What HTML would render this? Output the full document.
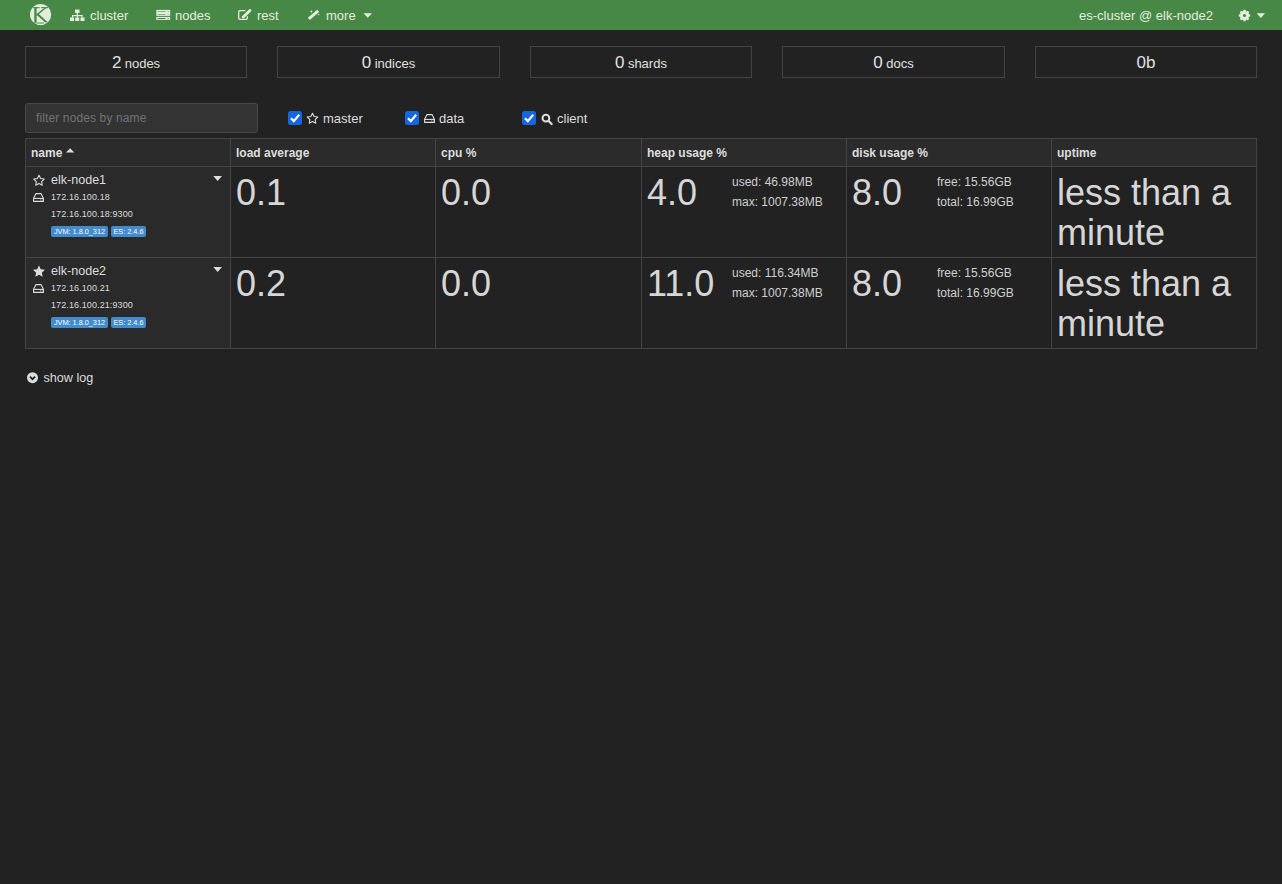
<!DOCTYPE html>
<html>
<head>
<meta charset="utf-8">
<style>
*{box-sizing:border-box;}
html,body{margin:0;padding:0;}
body{width:1282px;height:884px;background:#222222;font-family:"Liberation Sans",sans-serif;color:#dddddd;position:relative;overflow:hidden;font-size:12px;}
.a{position:absolute;white-space:nowrap;}
.nav{position:absolute;left:0;top:0;width:1282px;height:30px;background:#478847;color:#e4eede;font-size:13px;}
.nav .it{position:absolute;top:1px;height:30px;line-height:30px;white-space:nowrap;}
.stat{position:absolute;top:46px;height:32px;border:1px solid #444;text-align:center;line-height:32px;color:#e0e0e0;}
.stat b{font-weight:normal;font-size:17px;}
.stat span{font-size:13px;}
.filter{position:absolute;left:25px;top:103px;width:233px;height:30px;background:#333;border:1px solid #484848;border-radius:3px;color:#727272;font-size:12px;line-height:29px;padding-left:10px;letter-spacing:0.12px;}
.lbl{position:absolute;top:111px;font-size:13px;line-height:16px;color:#dddddd;}
.hl{position:absolute;background:#444;}
.th{position:absolute;top:139px;height:27px;line-height:28px;font-weight:bold;font-size:12px;color:#dddddd;}
.big{position:absolute;font-size:36px;line-height:42px;color:#d6d6d6;}
.sub{position:absolute;font-size:12px;line-height:20px;color:#d0d0d0;}
.up{position:absolute;font-size:36px;line-height:40px;color:#d6d6d6;}
.nm{position:absolute;font-size:13px;line-height:16px;color:#dddddd;transform:scaleX(0.965);transform-origin:0 0;}
.ip{position:absolute;font-size:9px;line-height:11px;color:#dcdcdc;letter-spacing:0.1px;transform:scaleY(1.08);transform-origin:0 0;}
.badge{position:absolute;top:0;height:11px;background:#428bcd;color:#fff;font-size:7.3px;line-height:11px;border-radius:2px;text-align:center;}
</style>
</head>
<body>
<div class="nav">
<svg class="a" style="left:0;top:0" width="1282" height="30" viewBox="0 0 1282 30">
<g fill="#e4eede">
<circle cx="40.6" cy="14.6" r="10.6" fill="#e2eedc"/>
<rect x="37" y="22.5" width="7" height="2.5" rx="1" fill="#e2eedc"/>
<rect x="75" y="9.5" width="4.5" height="3.5"/><rect x="76.7" y="13" width="1.2" height="2.2"/><rect x="72" y="15" width="10.5" height="1.2"/>
<rect x="72" y="15" width="1.2" height="2.5"/><rect x="76.7" y="15" width="1.2" height="2.5"/><rect x="81.3" y="15" width="1.2" height="2.5"/>
<rect x="70" y="17.5" width="4" height="3.5"/><rect x="75.2" y="17.5" width="4" height="3.5"/><rect x="80.5" y="17.5" width="4" height="3.5"/>
<rect x="156.3" y="9.9" width="13.9" height="6"/><rect x="156.3" y="16.9" width="13.9" height="3"/>
<path d="M245.5 10.7 H239.8 Q238.7 10.7 238.7 11.8 V18.2 Q238.7 19.3 239.8 19.3 H246.2 Q247.3 19.3 247.3 18.2 V16.3" fill="none" stroke="#e4eede" stroke-width="1.3"/>
<path d="M243.2 17 L250 10.6" stroke="#e4eede" stroke-width="2.8" stroke-linecap="round"/>
<path d="M308.8 18.8 L318.2 10.8" stroke="#e4eede" stroke-width="3"/>
<path d="M311.3 10 L311.8 11.2 L313 11.5 L311.8 11.9 L311.3 13 L310.9 11.9 L309.7 11.5 L310.9 11.2Z"/>
<path d="M318.6 13.6 L319 14.4 L319.8 14.6 L319 14.9 L318.6 15.7 L318.3 14.9 L317.5 14.6 L318.3 14.4Z"/>
<path d="M363.5 13.2 H372 L367.75 17.8Z"/>
<path d="M1256.7 13.2 H1265 L1260.85 17.9Z"/>
</g>
<g fill="#478847">
<rect x="34.3" y="7.2" width="2.3" height="15.6"/>
<rect x="33.2" y="7.1" width="6.3" height="1.1"/>
<rect x="41" y="7.1" width="7" height="1.1"/>
<rect x="36.6" y="22.6" width="7.4" height="0.9"/>
<polygon points="36.3,14.3 44.3,8 46.3,8 36.6,16"/>
<polygon points="38.2,13.4 47.8,22.2 45.2,22.6 36.8,15"/>
<rect x="157.5" y="11" width="8" height="1" opacity="0.6"/><rect x="157.5" y="14" width="8" height="1" opacity="0.6"/><rect x="157.5" y="18" width="8" height="1"/>
<rect x="167.6" y="11" width="1" height="1" opacity="0.6"/><rect x="167.6" y="14" width="1" height="1" opacity="0.6"/><rect x="167.6" y="18" width="1" height="1"/>
</g>
</svg>
<svg class="a" style="left:1238px;top:9px" width="13" height="13" viewBox="-6.5 -6.5 13 13">
<g fill="#e4eede"><circle r="4.5"/>
<rect x="-1.25" y="-5.7" width="2.5" height="11.4" rx="0.6"/>
<rect x="-1.25" y="-5.7" width="2.5" height="11.4" rx="0.6" transform="rotate(45)"/>
<rect x="-1.25" y="-5.7" width="2.5" height="11.4" rx="0.6" transform="rotate(90)"/>
<rect x="-1.25" y="-5.7" width="2.5" height="11.4" rx="0.6" transform="rotate(135)"/></g>
<circle r="1.6" fill="#478847"/>
</svg>
<div class="it" style="left:90px">cluster</div>
<div class="it" style="left:175px">nodes</div>
<div class="it" style="left:257px">rest</div>
<div class="it" style="left:326px">more</div>
<div class="it" style="left:1079px">es-cluster @ elk-node2</div>
</div>
<div class="stat" style="left:25px;width:222px"><b>2</b> <span>nodes</span></div>
<div class="stat" style="left:277px;width:223px"><b>0</b> <span>indices</span></div>
<div class="stat" style="left:530px;width:222px"><b>0</b> <span>shards</span></div>
<div class="stat" style="left:782px;width:223px"><b>0</b> <span>docs</span></div>
<div class="stat" style="left:1035px;width:222px"><b>0b</b></div>
<div class="filter">filter nodes by name</div>
<svg class="a" style="left:0;top:0" width="1282" height="884" viewBox="0 0 1282 884">
<rect x="288" y="111" width="14" height="14" rx="2.5" fill="#1467e0"/><path d="M291 118.3 L293.8 121.1 L299.2 114.8" fill="none" stroke="#fff" stroke-width="2.1"/>
<rect x="405" y="111" width="14" height="14" rx="2.5" fill="#1467e0"/><path d="M408 118.3 L410.8 121.1 L416.2 114.8" fill="none" stroke="#fff" stroke-width="2.1"/>
<rect x="522" y="111" width="14" height="14" rx="2.5" fill="#1467e0"/><path d="M525 118.3 L527.8 121.1 L533.2 114.8" fill="none" stroke="#fff" stroke-width="2.1"/>
<polygon points="312.50,113.20 314.12,116.48 317.73,117.00 315.12,119.55 315.73,123.15 312.50,121.45 309.27,123.15 309.88,119.55 307.27,117.00 310.88,116.48" fill="none" stroke="#dddddd" stroke-width="1.1" stroke-linejoin="round"/>
<path d="M427 114.6 H432 L434.4 119.2 V122.4 H424.6 V119.2 Z" fill="none" stroke="#dddddd" stroke-width="1.1" stroke-linejoin="round"/><path d="M424.6 119.4 H434.4" stroke="#dddddd" stroke-width="1.1"/><rect x="431" y="120.4" width="1" height="1" fill="#dddddd" opacity="0.7"/><rect x="432.6" y="120.4" width="1" height="1" fill="#dddddd" opacity="0.7"/>
<circle cx="545.9" cy="118.2" r="3.4" fill="none" stroke="#dddddd" stroke-width="2"/><path d="M548.6 121 L551.6 124" stroke="#dddddd" stroke-width="2.3" stroke-linecap="round"/>
<rect x="25" y="138" width="1232" height="28" fill="#2b2b2b"/>
<rect x="25" y="166" width="205" height="182" fill="#2a2a2a"/>
<rect x="25" y="138" width="1232" height="1" fill="#444"/>
<rect x="25" y="166" width="1232" height="1" fill="#444"/>
<rect x="25" y="257" width="1232" height="1" fill="#444"/>
<rect x="25" y="348" width="1232" height="1" fill="#444"/>
<rect x="25" y="138" width="1" height="211" fill="#444"/>
<rect x="230" y="138" width="1" height="211" fill="#444"/>
<rect x="435" y="138" width="1" height="211" fill="#444"/>
<rect x="641" y="138" width="1" height="211" fill="#444"/>
<rect x="846" y="138" width="1" height="211" fill="#444"/>
<rect x="1051" y="138" width="1" height="211" fill="#444"/>
<rect x="1256" y="138" width="1" height="211" fill="#444"/>
<path d="M66 152.5 H74.3 L70.15 148.3Z" fill="#dddddd"/>
<polygon points="39.00,175.20 40.62,178.48 44.23,179.00 41.62,181.55 42.23,185.15 39.00,183.45 35.77,185.15 36.38,181.55 33.77,179.00 37.38,178.48" fill="none" stroke="#dddddd" stroke-width="1.1" stroke-linejoin="round"/>
<path d="M36 193.6 H41 L43.4 198.2 V201.4 H33.6 V198.2 Z" fill="none" stroke="#dddddd" stroke-width="1.1" stroke-linejoin="round"/><path d="M33.6 198.4 H43.4" stroke="#dddddd" stroke-width="1.1"/><rect x="40" y="199.4" width="1" height="1" fill="#dddddd" opacity="0.7"/><rect x="41.6" y="199.4" width="1" height="1" fill="#dddddd" opacity="0.7"/>
<path d="M213.3 176 H222 L217.65 181Z" fill="#dddddd"/>
<polygon points="39.00,265.40 40.76,269.27 44.99,269.75 41.85,272.63 42.70,276.80 39.00,274.70 35.30,276.80 36.15,272.63 33.01,269.75 37.24,269.27" fill="#dddddd"/>
<path d="M36 284.6 H41 L43.4 289.2 V292.4 H33.6 V289.2 Z" fill="none" stroke="#dddddd" stroke-width="1.1" stroke-linejoin="round"/><path d="M33.6 289.4 H43.4" stroke="#dddddd" stroke-width="1.1"/><rect x="40" y="290.4" width="1" height="1" fill="#dddddd" opacity="0.7"/><rect x="41.6" y="290.4" width="1" height="1" fill="#dddddd" opacity="0.7"/>
<path d="M213.3 267 H222 L217.65 272Z" fill="#dddddd"/>
<circle cx="32.5" cy="377.7" r="5.5" fill="#dddddd"/><path d="M29.9 376.6 L32.5 379.2 L35.1 376.6" fill="none" stroke="#222" stroke-width="1.7"/>
</svg>
<div class="lbl" style="left:323px">master</div>
<div class="lbl" style="left:439px">data</div>
<div class="lbl" style="left:557px">client</div>
<div class="th a" style="left:31px">name</div>
<div class="th a" style="left:236px">load average</div>
<div class="th a" style="left:441px">cpu %</div>
<div class="th a" style="left:647px">heap usage %</div>
<div class="th a" style="left:852px">disk usage %</div>
<div class="th a" style="left:1057px">uptime</div>
<div class="nm a" style="left:51px;top:172px">elk-node1</div>
<div class="ip a" style="left:51px;top:191px">172.16.100.18</div>
<div class="ip a" style="left:51px;top:208px">172.16.100.18:9300</div>
<div class="a" style="left:51px;top:226px;width:100px;height:11px"><div class="badge" style="left:0;width:57px">JVM: 1.8.0_312</div><div class="badge" style="left:60px;width:35px">ES: 2.4.6</div></div>
<div class="big a" style="left:236px;top:172px">0.1</div>
<div class="big a" style="left:441px;top:172px">0.0</div>
<div class="big a" style="left:647px;top:172px">4.0</div>
<div class="sub a" style="left:732px;top:172px">used: 46.98MB<br>max: 1007.38MB</div>
<div class="big a" style="left:852px;top:172px">8.0</div>
<div class="sub a" style="left:937px;top:172px">free: 15.56GB<br>total: 16.99GB</div>
<div class="up a" style="left:1057px;top:173px">less than a<br>minute</div>
<div class="nm a" style="left:51px;top:263px">elk-node2</div>
<div class="ip a" style="left:51px;top:282px">172.16.100.21</div>
<div class="ip a" style="left:51px;top:299px">172.16.100.21:9300</div>
<div class="a" style="left:51px;top:317px;width:100px;height:11px"><div class="badge" style="left:0;width:57px">JVM: 1.8.0_312</div><div class="badge" style="left:60px;width:35px">ES: 2.4.6</div></div>
<div class="big a" style="left:236px;top:263px">0.2</div>
<div class="big a" style="left:441px;top:263px">0.0</div>
<div class="big a" style="left:647px;top:263px">11.0</div>
<div class="sub a" style="left:732px;top:263px">used: 116.34MB<br>max: 1007.38MB</div>
<div class="big a" style="left:852px;top:263px">8.0</div>
<div class="sub a" style="left:937px;top:263px">free: 15.56GB<br>total: 16.99GB</div>
<div class="up a" style="left:1057px;top:264px">less than a<br>minute</div>
<div class="a" style="left:43.5px;top:369.5px;font-size:12.6px;line-height:16px;color:#dddddd">show log</div>
</body>
</html>
